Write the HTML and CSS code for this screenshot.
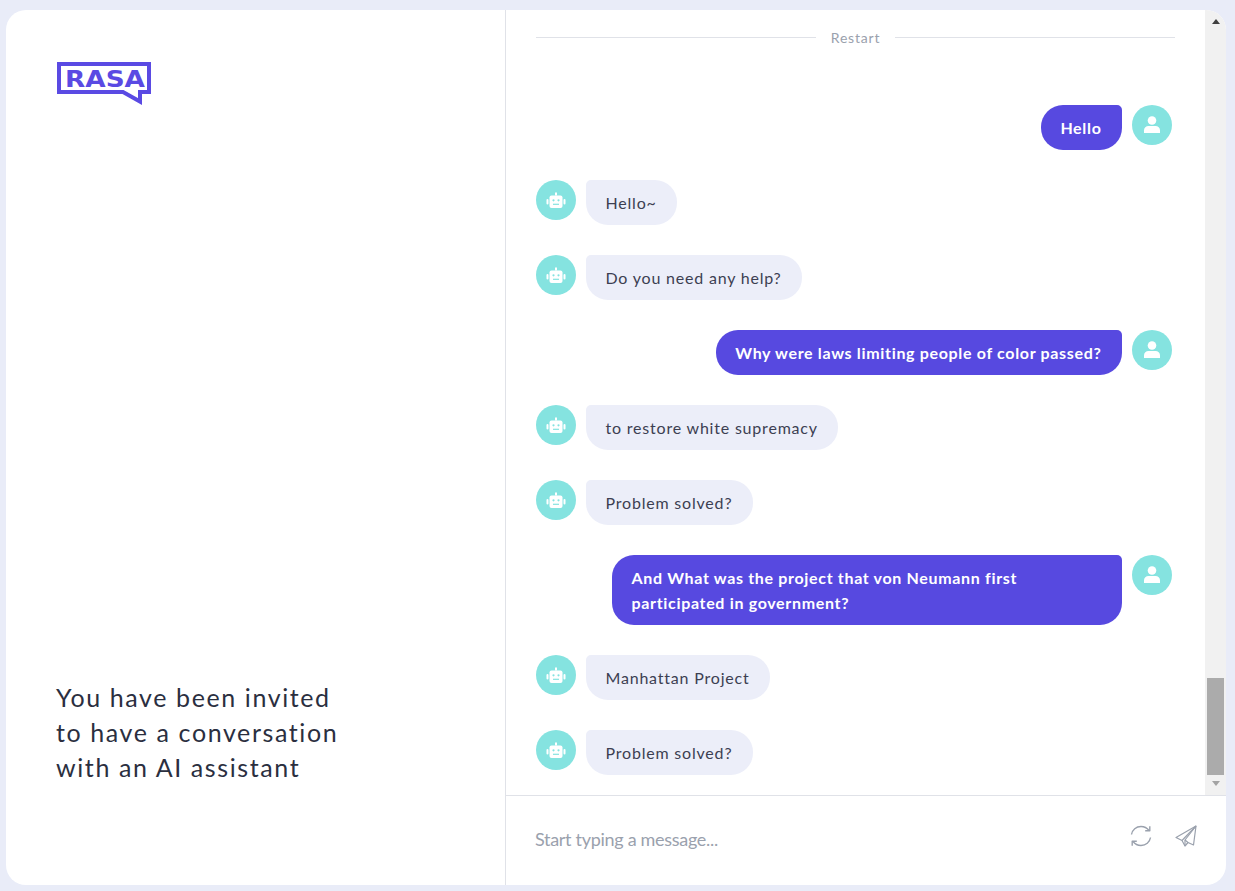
FILE: index.html
```html
<!DOCTYPE html>
<html lang="en">
<head>
  <meta charset="UTF-8">
  <title>Rasa | Conversation</title>
  <link rel="stylesheet" href="styles.css">
</head>
<body>

<div class="card">
  <div class="intro">
    <svg class="logo" width="94" height="44" viewBox="0 0 94 44">
      <path class="logo-frame" d="M2 2H92V30H83V39.500L66 30H2Z"/>
      <text class="logo-text" x="48" y="24.500" text-anchor="middle" textLength="80" lengthAdjust="spacingAndGlyphs">RASA</text>
    </svg>
    <p class="invite">You have been invited<br>to have a conversation<br>with an AI assistant</p>
  </div>

  <div class="chat">
    <div class="chat-top">
      <div class="messages">
        <div class="restart"><span>Restart</span></div>

        <div class="row row-user">
          <div class="bubble bubble-user">Hello</div>
          <div class="avatar"><svg width="20" height="20" viewBox="0 0 20 20"><use href="#user"/></svg></div>
        </div>
        <div class="row">
          <div class="avatar"><svg width="20" height="20" viewBox="0 0 20 20"><use href="#bot"/></svg></div>
          <div class="bubble">Hello~</div>
        </div>
        <div class="row">
          <div class="avatar"><svg width="20" height="20" viewBox="0 0 20 20"><use href="#bot"/></svg></div>
          <div class="bubble">Do you need any help?</div>
        </div>
        <div class="row row-user">
          <div class="bubble bubble-user">Why were laws limiting people of color passed?</div>
          <div class="avatar"><svg width="20" height="20" viewBox="0 0 20 20"><use href="#user"/></svg></div>
        </div>
        <div class="row">
          <div class="avatar"><svg width="20" height="20" viewBox="0 0 20 20"><use href="#bot"/></svg></div>
          <div class="bubble">to restore white supremacy</div>
        </div>
        <div class="row">
          <div class="avatar"><svg width="20" height="20" viewBox="0 0 20 20"><use href="#bot"/></svg></div>
          <div class="bubble">Problem solved?</div>
        </div>
        <div class="row row-user">
          <div class="bubble bubble-user bubble-wide">And What was the project that von Neumann first participated in government?</div>
          <div class="avatar"><svg width="20" height="20" viewBox="0 0 20 20"><use href="#user"/></svg></div>
        </div>
        <div class="row">
          <div class="avatar"><svg width="20" height="20" viewBox="0 0 20 20"><use href="#bot"/></svg></div>
          <div class="bubble">Manhattan Project</div>
        </div>
        <div class="row">
          <div class="avatar"><svg width="20" height="20" viewBox="0 0 20 20"><use href="#bot"/></svg></div>
          <div class="bubble">Problem solved?</div>
        </div>
      </div>

      <div class="scrollbar">
        <div class="arrow arrow-up"></div>
        <div class="track"><div class="thumb"></div></div>
        <div class="arrow arrow-down"></div>
      </div>
    </div>

    <div class="composer">
      <input class="message-input" type="text" placeholder="Start typing a message...">
      <svg class="tool tool-refresh" width="24" height="24" viewBox="0 0 24 24">
        <path d="M2.500 10.500C3.200 5.800 7.200 2.500 12 2.500c3.300 0 6.100 1.500 8 4"/>
        <path d="M20.800 2.200V6.800H16.200"/>
        <path d="M21.500 13.500C20.800 18.200 16.800 21.500 12 21.500c-3.300 0-6.100-1.500-8-4"/>
        <path d="M3.200 21.800V17.200H7.800"/>
      </svg>
      <svg class="tool" width="24" height="24" viewBox="0 0 24 24">
        <path d="M22 2L2 13.500L8 16.500L11 22L14 18.500L19.500 21Z"/>
        <path d="M22 2L8 16.500"/>
        <path d="M22 2L11 16V22"/>
        <path d="M11 16L14 18.500"/>
      </svg>
    </div>
  </div>
</div>

<!-- avatar icons -->
<svg class="defs" width="0" height="0">
  <symbol id="user" viewBox="0 0 20 20">
    <circle cx="10" cy="5.500" r="4.300" fill="#fff"/>
    <path d="M2 18v-2.500C2 12.500 4 11 6.500 11h7c2.500 0 4.500 1.500 4.500 4.500V18Z" fill="#fff"/>
  </symbol>
  <symbol id="bot" viewBox="0 0 20 20">
    <rect x="9" y="2.500" width="2" height="3" fill="#fff"/>
    <rect x="3.500" y="5.500" width="13" height="12.500" rx="2" fill="#fff"/>
    <rect x="0.500" y="9" width="2" height="5.500" rx="1" fill="#fff"/>
    <rect x="17.500" y="9" width="2" height="5.500" rx="1" fill="#fff"/>
    <circle cx="7.500" cy="10.300" r="1.100" fill="#85e3e0"/>
    <circle cx="12.500" cy="10.300" r="1.100" fill="#85e3e0"/>
    <rect x="7" y="13.700" width="6" height="1.200" fill="#85e3e0"/>
  </symbol>
</svg>

</body>
</html>
```

FILE: styles.css
```css
html, body {
  height: 100%;
}
body {
  margin: 0;
  padding: 10px 9px 6px 6px;
  box-sizing: border-box;
  background: #e9ecf8;
  font-family: 'Lato', sans-serif;
  overflow: hidden;
}
.card {
  display: flex;
  height: 875px;
  background: #fff;
  border-radius: 20px;
  overflow: hidden;
}
.intro {
  width: 500px;
  box-sizing: border-box;
  padding: 52px 50px 100px 51px;
  border-right: 1px solid #e0e2e8;
  display: flex;
  flex-direction: column;
  justify-content: space-between;
  flex: none;
}
.logo {
  display: block;
}
.logo-frame {
  fill: none;
  stroke: #5a4ae3;
  stroke-width: 4;
}
.logo-text {
  font-family: 'DejaVu Sans', sans-serif;
  font-weight: bold;
  font-size: 23px;
  fill: #5a4ae3;
}
.invite {
  margin: 0 0 0 -1px;
  font-size: 25px;
  line-height: 35px;
  letter-spacing: 1.6px;
  color: #2b2f3f;
}
.chat {
  flex: 1;
  display: flex;
  flex-direction: column;
  min-width: 0;
}
.chat-top {
  height: 785px;
  display: flex;
  border-bottom: 1px solid #e0e2e8;
}
.messages {
  flex: 1;
  padding: 17px 30px 0;
  overflow: hidden;
}
.restart {
  display: flex;
  align-items: center;
  gap: 15px;
  height: 20px;
  margin-bottom: 58px;
  font-size: 14px;
  letter-spacing: 0.8px;
  color: #9aa1ad;
}
.restart::before, .restart::after {
  content: "";
  flex: 1;
  border-top: 1px solid #e0e2e8;
}
.row {
  display: flex;
  gap: 10px;
  margin-bottom: 30px;
}
.row-user {
  justify-content: flex-end;
  padding-right: 3px;
}
.avatar {
  width: 40px;
  height: 40px;
  flex: none;
  border-radius: 50%;
  background: #85e3e0;
  display: flex;
  align-items: center;
  justify-content: center;
}
.bubble {
  padding: 10px 20.500px 10px 19.500px;
  font-size: 16px;
  line-height: 25px;
  letter-spacing: 0.8px;
  color: #3c3f52;
  background: #eceef9;
  border-radius: 5px 22px 22px 22px;
}
.bubble-user {
  background: #5749e0;
  color: #fff;
  font-weight: 700;
  letter-spacing: 0.67px;
  border-radius: 22px 5px 22px 22px;
}
.bubble-wide {
  width: 470px;
}
.scrollbar {
  width: 21px;
  flex: none;
  background: #f1f1f1;
  display: flex;
  flex-direction: column;
}
.arrow {
  height: 20px;
  flex: none;
  display: flex;
  align-items: center;
  justify-content: center;
}
.arrow::before {
  content: "";
  border-left: 4px solid transparent;
  border-right: 4px solid transparent;
}
.arrow-up {
  height: 22px;
}
.arrow-up::before {
  border-bottom: 5px solid #404040;
}
.arrow-down {
  padding-bottom: 3px;
  box-sizing: border-box;
}
.arrow-down::before {
  border-top: 5px solid #a3a3a3;
}
.track {
  flex: 1;
  display: flex;
  flex-direction: column;
  justify-content: flex-end;
}
.thumb {
  height: 97px;
  margin: 0 2px;
  background: #ababab;
}
.composer {
  flex: 1;
  display: flex;
  align-items: center;
  gap: 21px;
  padding: 0 28px 0 29px;
}
.message-input {
  flex: 1;
  min-width: 0;
  border: 0;
  outline: none;
  padding: 0;
  margin-bottom: 4px;
  font-family: 'Lato', sans-serif;
  font-size: 18px;
  letter-spacing: -0.3px;
  background: transparent;
}
.message-input::placeholder {
  color: #9aa1ad;
  opacity: 1;
}
.tool {
  flex: none;
  fill: none;
  stroke: #9aa1ad;
  stroke-width: 1.2;
  stroke-linejoin: round;
  margin-bottom: 10px;
}
.tool-refresh {
  stroke-width: 1.400;
}
.defs {
  position: absolute;
}
```
